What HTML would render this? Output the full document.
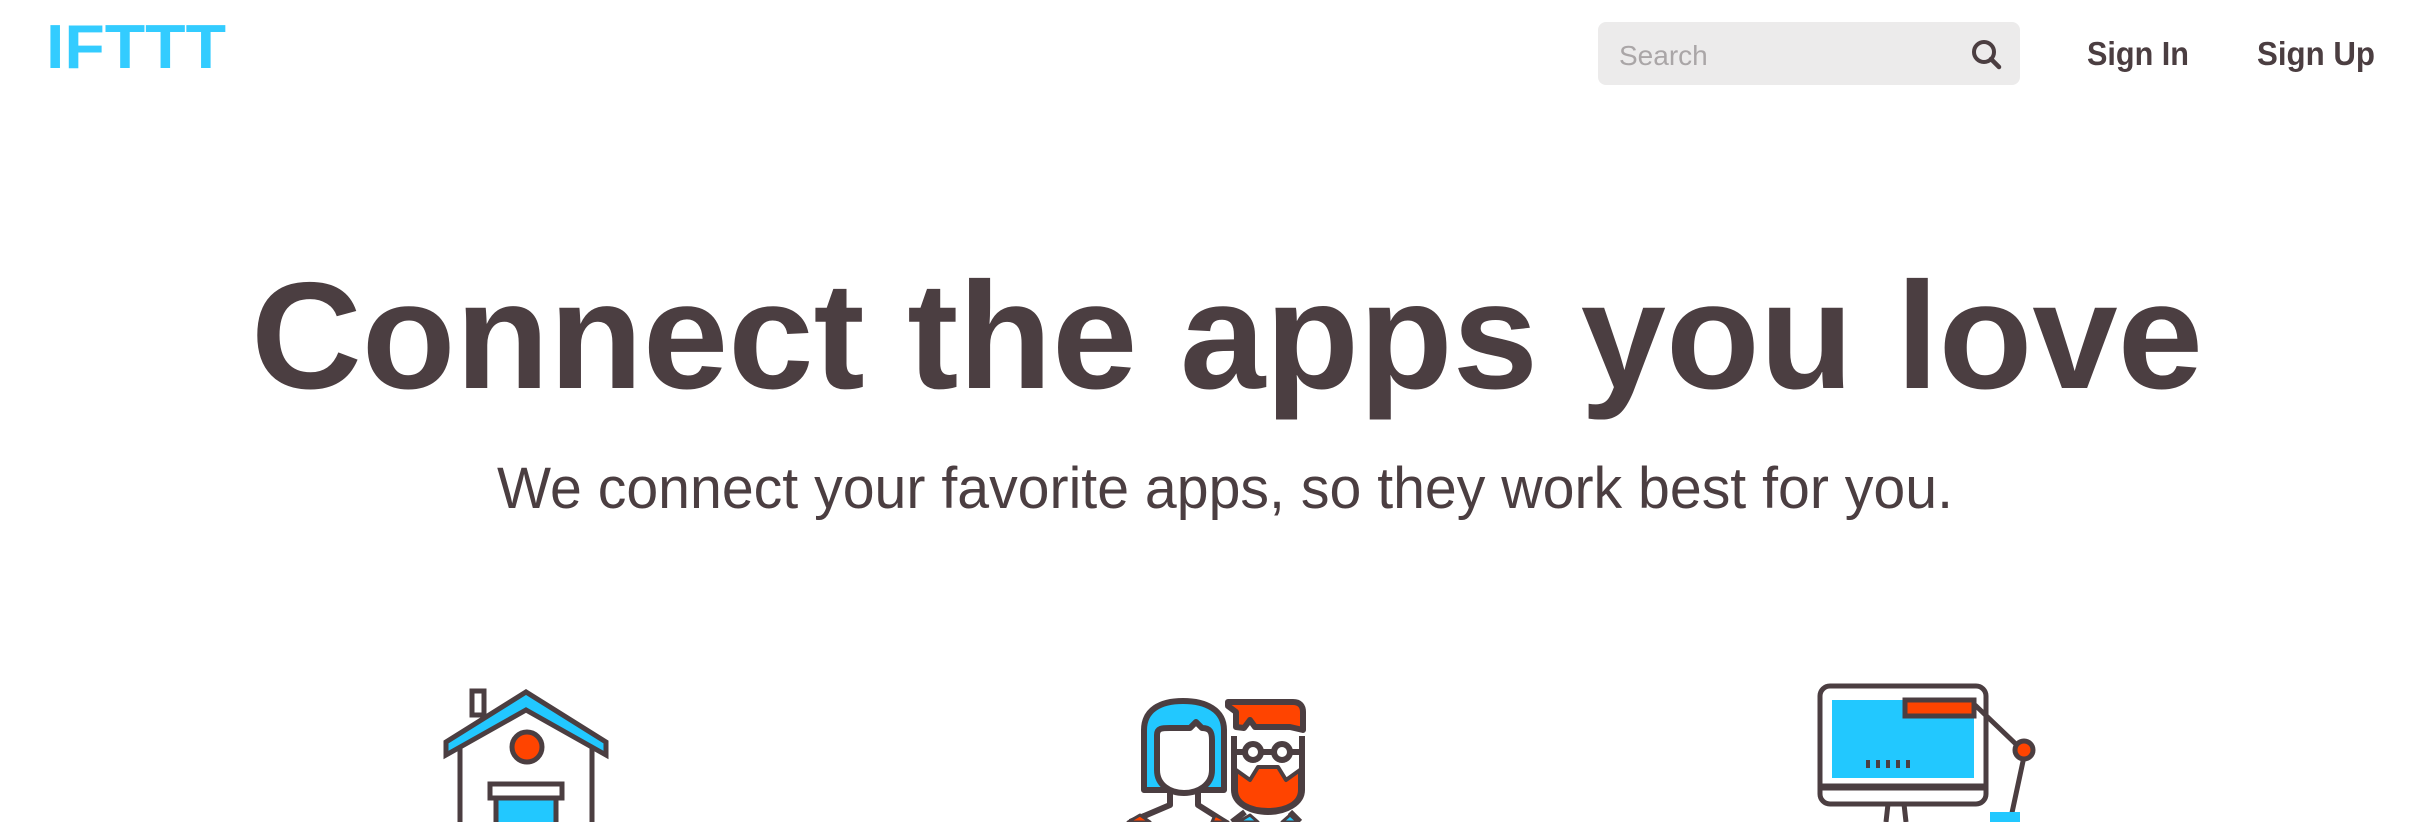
<!DOCTYPE html>
<html><head><meta charset="utf-8"><style>
html,body{margin:0;padding:0;background:#fff;width:2412px;height:822px;overflow:hidden;font-family:"Liberation Sans",sans-serif;color:#4b3e41}
.abs{position:absolute}
</style></head><body>
<svg class="abs" style="left:0;top:0" width="2412" height="822" viewBox="0 0 2412 822">
<text x="46" y="68" font-family="Liberation Sans" font-weight="bold" font-size="62" fill="#33ccff" textLength="180" lengthAdjust="spacingAndGlyphs">IFTTT</text>
<rect x="1598" y="22" width="422" height="63" rx="8" fill="#ecebeb"/>
<text x="1619" y="65" font-family="Liberation Sans" font-size="28" fill="#aaa6a7">Search</text>
<circle cx="1984" cy="52" r="10" fill="none" stroke="#4b3e41" stroke-width="4"/>
<line x1="1991" y1="59" x2="1999" y2="67" stroke="#4b3e41" stroke-width="4.5" stroke-linecap="round"/>
<text x="2087" y="65" font-family="Liberation Sans" font-weight="bold" font-size="33" fill="#4b3e41" textLength="102" lengthAdjust="spacingAndGlyphs">Sign In</text>
<text x="2257" y="65" font-family="Liberation Sans" font-weight="bold" font-size="33" fill="#4b3e41" textLength="118" lengthAdjust="spacingAndGlyphs">Sign Up</text>
<text x="251" y="388" font-family="Liberation Sans" font-weight="bold" font-size="152" fill="#4b3e41" textLength="1952" lengthAdjust="spacingAndGlyphs">Connect the apps you love</text>
<text x="497" y="508" font-family="Liberation Sans" font-size="58" fill="#4b3e41" textLength="1456" lengthAdjust="spacingAndGlyphs">We connect your favorite apps, so they work best for you.</text>
<g stroke="#4b3e41" stroke-width="5" fill="none">
<rect x="472" y="691" width="12" height="24" fill="#fff"/>
<path d="M446 742 L526 692 L606 742 L606 755 L526 710 L446 755 Z" fill="#22c8ff"/>
<path d="M460 748 V822 M592 748 V822"/>
<ellipse cx="527" cy="747" rx="15" ry="15" fill="#ff4400"/>
<rect x="490" y="784" width="72" height="14" fill="#fff"/>
<rect x="496" y="798" width="60" height="30" fill="#22c8ff"/>
</g>
<g stroke="#4b3e41" stroke-width="6" stroke-linejoin="round">
<path d="M1144 790 L1144 730 C1144 710 1160 701 1183 701 C1206 701 1224 710 1224 730 L1224 790 Z" fill="#22c8ff"/>
<path d="M1157 735 C1157 728 1162 728 1170 728 L1190 728 L1196 722 L1202 728 C1210 728 1212 732 1212 740 L1212 770 C1212 785 1198 793 1184 793 C1170 793 1157 785 1157 770 Z" fill="#fff"/>
<path d="M1170 793 L1170 805 L1130 822 M1198 793 L1198 805 L1225 822" fill="none"/>
<path d="M1128 822 L1140 815 L1150 822 Z M1215 815 L1228 822 L1212 822 Z" fill="#ff4400" stroke-width="3"/>
<path d="M1228 702 L1293 702 C1300 702 1303 706 1303 712 L1303 730 L1290 727 L1255 727 L1250 720 L1244 728 L1236 727 L1236 712 L1228 706 Z" fill="#ff4400"/>
<path d="M1234 736 L1234 790 C1234 803 1250 812 1268 812 C1286 812 1302 803 1302 790 L1302 736" fill="#fff"/>
<path d="M1236 770 L1250 780 L1258 767 L1278 767 L1286 780 L1300 770 L1300 790 C1300 803 1286 810 1268 810 C1250 810 1236 803 1236 790 Z" fill="#ff4400" stroke-width="4"/>
<line x1="1234" y1="752" x2="1302" y2="752"/>
<circle cx="1253" cy="752" r="8" fill="#fff"/><circle cx="1282" cy="752" r="8" fill="#fff"/>
<path d="M1245 812 L1232 822 M1290 812 L1300 822" fill="none"/>
<path d="M1238 822 L1250 815 L1258 822 Z M1282 822 L1290 815 L1298 822 Z" fill="#22c8ff" stroke-width="3"/>
</g>
<g stroke="#4b3e41" stroke-width="5">
<rect x="1820" y="686" width="166" height="118" rx="10" fill="#fff"/>
<rect x="1832" y="700" width="142" height="78" fill="#22c8ff" stroke="none"/>
<rect x="1905" y="700" width="69" height="16" fill="#ff4400"/>
<line x1="1822" y1="787" x2="1984" y2="787" stroke-width="7"/>
<path d="M1975 705 L2020 748 M2025 752 L2010 822" fill="none"/>
<circle cx="2024" cy="750" r="9" fill="#ff4400"/>
<path d="M1888 804 L1886 822 M1904 804 L1906 822" fill="none"/>
<path d="M1868 760 v8 M1878 760 v8 M1888 760 v8 M1898 760 v8 M1908 760 v8" stroke-width="4"/>
<rect x="1990" y="812" width="30" height="12" fill="#22c8ff" stroke="none"/>
</g>
</svg>
</body></html>
